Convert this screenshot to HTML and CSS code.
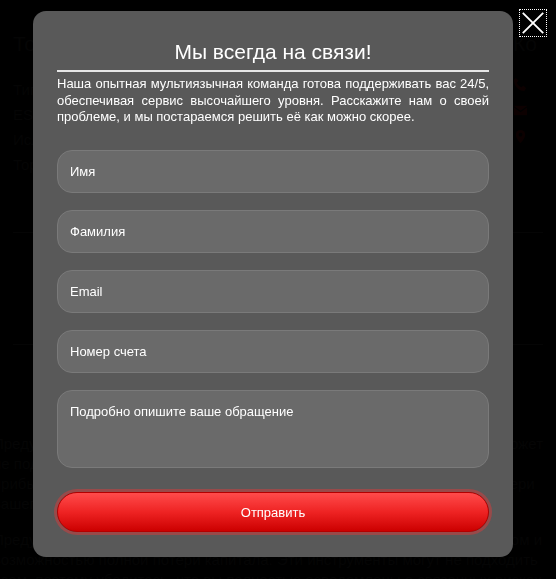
FILE: index.html
```html
<!DOCTYPE html>
<html lang="ru">
<head>
<meta charset="utf-8">
<title>Контакт</title>
<link rel="stylesheet" href="styles.css">
</head>
<body>
<div class="page">
  <div class="top">
    <div class="col col-a">
      <div class="col-title">Торговля</div>
      <ul class="links">
        <li>Типы счетов</li>
        <li>ESG</li>
        <li>Исламские счета</li>
        <li>Торговый робот</li>
      </ul>
    </div>
    <div class="col col-b">
      <div class="col-title small">Платформы</div>
    </div>
    <div class="col col-c">
      <div class="col-title">Ко</div>
      <div class="icons">
        <svg viewBox="0 0 16 16" width="15" height="15"><path d="M3 1l3 3-2 2c1 2 3 4 5 5l2-2 3 3-2 3C6 15 1 10 1 3z" fill="#0c0000"/></svg>
        <svg viewBox="0 0 16 16" width="15" height="15"><rect x="1" y="3" width="14" height="10" fill="#0c0000"/><path d="M1 4l7 5 7-5" stroke="#000" stroke-width="1.2" fill="none"/></svg>
        <svg viewBox="0 0 16 16" width="15" height="15"><path d="M8 1a5 5 0 0 1 5 5c0 4-5 9-5 9S3 10 3 6a5 5 0 0 1 5-5z" fill="#0c0000"/><circle cx="8" cy="6" r="2" fill="#000"/></svg>
      </div>
    </div>
  </div>
  <div class="band">Юридическое уведомление о компании и регулировании</div>
  <div class="company">Company No. 2025 00066</div>
  <div class="risk">
    <p>Предупреждение о риске: торговля CFD сопряжена с высоким риском и может не подходить всем инвесторам. Кредитное плечо может как увеличивать прибыль, так и приводить к значительным убыткам, вплоть до полной потери вашего капитала, даже если у вас нет опыта выполнения таких операций.</p>
    <p>Предупреждение о риске: Торговые инструменты связаны с высоким риском и возможностью полной потери капитала. Эти инструменты могут не подходить всем, поэтому убедитесь, что вы полностью осведомлены о связанных рисках. Для получения детальной информации, пожалуйста, изучите Заявление.</p>
  </div>
</div>

<div class="modal">
  <h2 class="modal-title">Мы всегда на связи!</h2>
  <div class="modal-rule"></div>
  <p class="modal-text">Наша опытная мультиязычная команда готова поддерживать вас 24/5, обеспечивая сервис высочайшего уровня. Расскажите нам о своей проблеме, и мы постараемся решить её как можно скорее.</p>
  <form class="form">
    <input class="field" type="text" placeholder="Имя">
    <input class="field" type="text" placeholder="Фамилия">
    <input class="field" type="text" placeholder="Email">
    <input class="field" type="text" placeholder="Номер счета">
    <textarea class="field area" placeholder="Подробно опишите ваше обращение"></textarea>
    <button class="submit" type="button">Отправить</button>
  </form>
</div>

<button class="close" type="button" aria-label="Закрыть">
  <svg viewBox="0 0 28 28" width="26" height="26"><path d="M3 3L25 25M25 3L3 25" stroke="#fff" stroke-width="2" fill="none"/></svg>
</button>
</body>
</html>
```

FILE: styles.css
```css
html, body {
  margin: 0;
  padding: 0;
  background: #000;
  height: 100%;
  overflow: hidden;
}
body {
  font-family: "Liberation Sans", Arial, sans-serif;
}
.page {
  color: #050505;
  padding: 0 13px;
  height: 579px;
  overflow: hidden;
}
.top {
  display: flex;
  padding-top: 31px;
  height: 201px;
  border-bottom: 1px solid #050505;
}
.col-a { width: 290px; }
.col-b { flex: 1; }
.col-c { width: 30px; }
.col-title {
  font-size: 21px;
  line-height: 26px;
}
.col-title.small {
  font-size: 15px;
}
.links {
  list-style: none;
  margin: 20px 0 0;
  padding: 0;
  font-size: 15px;
  line-height: 25px;
}
.icons {
  display: flex;
  flex-direction: column;
  gap: 11px;
  margin-top: 20px;
}
.band {
  height: 111px;
  border-bottom: 1px solid #050505;
  display: flex;
  align-items: center;
  justify-content: center;
  color: #090101;
  font-size: 15px;
  white-space: nowrap;
  font-weight: bold;
}
.company {
  text-align: right;
  padding: 62px 90px 0 0;
  font-size: 15px;
}
.risk {
  font-size: 15px;
  line-height: 20px;
  margin-left: -20px;
  margin-right: -20px;
}
.risk p { margin: 10px 0 16px; }

.modal {
  position: fixed;
  left: 33px;
  top: 11px;
  width: 480px;
  height: 546px;
  box-sizing: border-box;
  padding: 27px 24px 0;
  background: rgba(92, 92, 92, 0.97);
  border-radius: 13px;
  color: #fff;
  display: flex;
  flex-direction: column;
}
.modal-title {
  margin: 0;
  font-weight: normal;
  font-size: 21px;
  line-height: 27px;
  text-align: center;
}
.modal-rule {
  height: 2px;
  background: #e6e6e6;
  margin-top: 5px;
}
.modal-text {
  margin: 4px 0 0;
  font-size: 13px;
  line-height: 16.7px;
  text-align: justify;
}
.form {
  display: flex;
  flex-direction: column;
  gap: 17px;
  margin-top: 24px;
}
.field {
  box-sizing: border-box;
  height: 43px;
  width: 100%;
  border: 1px solid #7a7a7a;
  border-radius: 15px;
  background: #6a6a6a;
  color: #fff;
  font-family: "Liberation Sans", Arial, sans-serif;
  font-size: 13px;
  padding: 0 12px;
  outline: none;
}
.field::placeholder { color: #fff; opacity: 1; }
.area {
  height: 78px;
  padding-top: 13px;
  resize: none;
}
.submit {
  margin-top: 7px;
  height: 40px;
  border: 1px solid #b30000;
  border-radius: 20px;
  background: linear-gradient(#ff4b4b, #ee2323 50%, #cc0000);
  box-shadow: 0 0 0 3px rgba(215, 60, 60, 0.5);
  color: #fff;
  font-family: "Liberation Sans", Arial, sans-serif;
  font-size: 13px;
  cursor: pointer;
}
.close {
  position: fixed;
  left: 519px;
  top: 9px;
  width: 28px;
  height: 28px;
  padding: 0;
  background: transparent;
  border: 1px dotted #fff;
  display: flex;
  align-items: center;
  justify-content: center;
}
.close svg { display: block; }
```
